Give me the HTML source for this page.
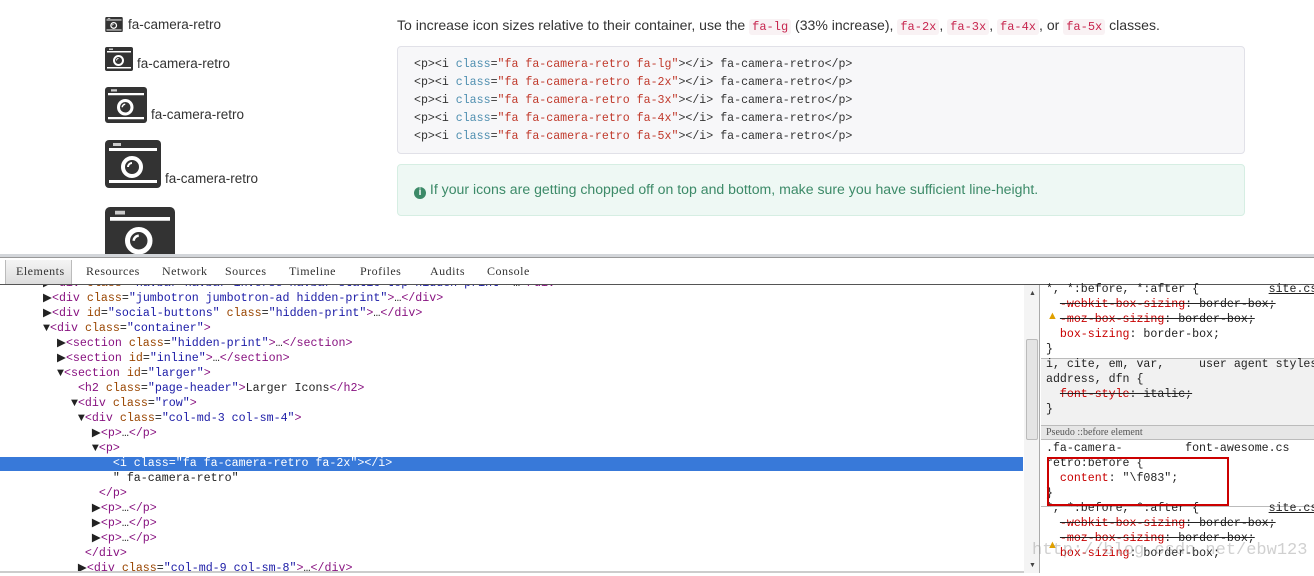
<!DOCTYPE html>
<html><head><meta charset="utf-8"><style>
*{margin:0;padding:0;box-sizing:border-box}
body{width:1314px;height:573px;overflow:hidden;background:#fff;font-family:"Liberation Sans",sans-serif;position:relative}
.a{position:absolute}
.lbl{font-size:13.5px;color:#333;white-space:nowrap}
code.k{font-family:"Liberation Mono",monospace;font-size:12px;color:#c7254e;background:#f9f2f4;padding:1px 3px;border-radius:3px}
pre{font-family:"Liberation Mono",monospace;font-size:11.6px;line-height:18px;color:#333}
.tg{color:#333}
.at{color:#4f8fb0}
.av{color:#c0392b}
.dt{font-family:"Liberation Mono",monospace;font-size:11.65px;line-height:15px;white-space:pre;color:#222}
.n{color:#881280}.an{color:#994500}.v{color:#1a1aa6}
.tab{position:absolute;top:264px;font-family:"Liberation Serif",serif;font-size:12px;color:#333;letter-spacing:.5px}
.s{font-family:"Liberation Mono",monospace;font-size:11.6px;line-height:15px;white-space:pre;color:#222}
.p{color:#c80000}
.x{text-decoration:line-through}
</style></head><body>

<svg width="0" height="0" style="position:absolute"><defs>
<symbol id="cam" viewBox="0 0 56 48">
<rect x="0" y="0" width="56" height="48" rx="4" fill="#333"/>
<rect x="8" y="3" width="8" height="3" fill="#ccc"/>
<rect x="4" y="8" width="48" height="3" fill="#fff"/>
<circle cx="27" cy="27" r="9" fill="none" stroke="#fff" stroke-width="4"/>
<path d="M23 27a4 4 0 0 1 4-4" stroke="#fff" stroke-width="2" fill="none"/>
<rect x="4" y="40" width="48" height="3" fill="#fff"/>
</symbol></defs></svg>

<svg class="a" style="left:105px;top:17px" width="18" height="15"><use href="#cam"/></svg>
<div class="a lbl" style="left:128px;top:17px">fa-camera-retro</div>
<svg class="a" style="left:105px;top:47px" width="28" height="24"><use href="#cam"/></svg>
<div class="a lbl" style="left:137px;top:56px">fa-camera-retro</div>
<svg class="a" style="left:105px;top:87px" width="42" height="36"><use href="#cam"/></svg>
<div class="a lbl" style="left:151px;top:107px">fa-camera-retro</div>
<svg class="a" style="left:105px;top:140px" width="56" height="48"><use href="#cam"/></svg>
<div class="a lbl" style="left:165px;top:171px">fa-camera-retro</div>
<svg class="a" style="left:105px;top:207px" width="70" height="60" viewBox="0 0 70 60"><use href="#cam" width="70" height="60"/></svg>

<div class="a lbl" style="left:397px;top:17px;font-size:14.05px">To increase icon sizes relative to their container, use the <code class="k">fa-lg</code> (33% increase), <code class="k">fa-2x</code>, <code class="k">fa-3x</code>, <code class="k">fa-4x</code>, or <code class="k">fa-5x</code> classes.</div>

<div class="a" style="left:397px;top:46px;width:848px;height:108px;background:#f7f7f9;border:1px solid #e1e1e8;border-radius:4px;padding:9px 16px">
<pre><span class="tg">&lt;p&gt;&lt;i</span> <span class="at">class</span>=<span class="av">"fa fa-camera-retro fa-lg"</span><span class="tg">&gt;&lt;/i&gt;</span> fa-camera-retro<span class="tg">&lt;/p&gt;</span>
<span class="tg">&lt;p&gt;&lt;i</span> <span class="at">class</span>=<span class="av">"fa fa-camera-retro fa-2x"</span><span class="tg">&gt;&lt;/i&gt;</span> fa-camera-retro<span class="tg">&lt;/p&gt;</span>
<span class="tg">&lt;p&gt;&lt;i</span> <span class="at">class</span>=<span class="av">"fa fa-camera-retro fa-3x"</span><span class="tg">&gt;&lt;/i&gt;</span> fa-camera-retro<span class="tg">&lt;/p&gt;</span>
<span class="tg">&lt;p&gt;&lt;i</span> <span class="at">class</span>=<span class="av">"fa fa-camera-retro fa-4x"</span><span class="tg">&gt;&lt;/i&gt;</span> fa-camera-retro<span class="tg">&lt;/p&gt;</span>
<span class="tg">&lt;p&gt;&lt;i</span> <span class="at">class</span>=<span class="av">"fa fa-camera-retro fa-5x"</span><span class="tg">&gt;&lt;/i&gt;</span> fa-camera-retro<span class="tg">&lt;/p&gt;</span></pre>
</div>

<div class="a" style="left:397px;top:164px;width:848px;height:52px;background:#eef8f4;border:1px solid #d6eee3;border-radius:4px;padding:16px 16px;font-size:14.1px;color:#3c8a68;white-space:nowrap">
<span style="display:inline-block;width:12px;height:12px;border-radius:50%;background:#3c8a68;color:#fff;font-size:10px;line-height:12px;text-align:center;font-weight:bold;vertical-align:-1px">i</span> If your icons are getting chopped off on top and bottom, make sure you have sufficient line-height.</div>

<!-- devtools -->
<div class="a" style="left:0;top:255px;width:1314px;height:318px;background:#fff"></div>
<div class="a" style="left:0;top:254px;width:1314px;height:4px;background:#d3d6da;border-bottom:1px solid #999"></div>
<div class="a" style="left:0;top:284px;width:1314px;height:1px;background:#555"></div>
<div class="a" style="left:5px;top:260px;width:67px;height:24px;background:linear-gradient(#f4f4f4,#ddd);border-left:1px solid #bbb;border-right:1px solid #bbb"></div>
<div class="tab" style="left:16px">Elements</div>
<div class="tab" style="left:86px">Resources</div>
<div class="tab" style="left:162px">Network</div>
<div class="tab" style="left:225px">Sources</div>
<div class="tab" style="left:289px">Timeline</div>
<div class="tab" style="left:360px">Profiles</div>
<div class="tab" style="left:430px">Audits</div>
<div class="tab" style="left:487px">Console</div>

<div class="a" style="left:0;top:457px;width:1023px;height:14px;background:#3879d9"></div>
<div class="a dt" style="left:43px;top:276px;clip-path:inset(9px 0 0 0)">▶<span class="n">&lt;div</span> <span class="an">class</span>=<span class="v">"navbar navbar-inverse navbar-static-top hidden-print"</span><span class="n">&gt;</span>…<span class="n">&lt;/div&gt;</span></div>
<div class="a dt" style="left:43px;top:291px">▶<span class="n">&lt;div</span> <span class="an">class</span>=<span class="v">"jumbotron jumbotron-ad hidden-print"</span><span class="n">&gt;</span>…<span class="n">&lt;/div&gt;</span>
▶<span class="n">&lt;div</span> <span class="an">id</span>=<span class="v">"social-buttons"</span> <span class="an">class</span>=<span class="v">"hidden-print"</span><span class="n">&gt;</span>…<span class="n">&lt;/div&gt;</span>
▼<span class="n">&lt;div</span> <span class="an">class</span>=<span class="v">"container"</span><span class="n">&gt;</span>
  ▶<span class="n">&lt;section</span> <span class="an">class</span>=<span class="v">"hidden-print"</span><span class="n">&gt;</span>…<span class="n">&lt;/section&gt;</span>
  ▶<span class="n">&lt;section</span> <span class="an">id</span>=<span class="v">"inline"</span><span class="n">&gt;</span>…<span class="n">&lt;/section&gt;</span>
  ▼<span class="n">&lt;section</span> <span class="an">id</span>=<span class="v">"larger"</span><span class="n">&gt;</span>
     <span class="n">&lt;h2</span> <span class="an">class</span>=<span class="v">"page-header"</span><span class="n">&gt;</span>Larger Icons<span class="n">&lt;/h2&gt;</span>
    ▼<span class="n">&lt;div</span> <span class="an">class</span>=<span class="v">"row"</span><span class="n">&gt;</span>
     ▼<span class="n">&lt;div</span> <span class="an">class</span>=<span class="v">"col-md-3 col-sm-4"</span><span class="n">&gt;</span>
       ▶<span class="n">&lt;p&gt;</span>…<span class="n">&lt;/p&gt;</span>
       ▼<span class="n">&lt;p&gt;</span>
<span style="color:#fff">          &lt;i class="fa fa-camera-retro fa-2x"&gt;&lt;/i&gt;</span>
          " fa-camera-retro"
        <span class="n">&lt;/p&gt;</span>
       ▶<span class="n">&lt;p&gt;</span>…<span class="n">&lt;/p&gt;</span>
       ▶<span class="n">&lt;p&gt;</span>…<span class="n">&lt;/p&gt;</span>
       ▶<span class="n">&lt;p&gt;</span>…<span class="n">&lt;/p&gt;</span>
      <span class="n">&lt;/div&gt;</span>
     ▶<span class="n">&lt;div</span> <span class="an">class</span>=<span class="v">"col-md-9 col-sm-8"</span><span class="n">&gt;</span>…<span class="n">&lt;/div&gt;</span></div>
<div class="a" style="left:0;top:571px;width:1024px;height:2px;background:#ccc"></div>

<!-- scrollbar -->
<div class="a" style="left:1024px;top:285px;width:16px;height:288px;background:#f4f4f4;border-right:1px solid #aaa"></div>
<div class="a" style="left:1026px;top:339px;width:12px;height:101px;background:#e4e4e4;border:1px solid #bbb;border-radius:2px"></div>
<div class="a" style="left:1029px;top:290px;font-size:7px;color:#444">▲</div>
<div class="a" style="left:1029px;top:562px;font-size:7px;color:#444">▼</div>

<!-- styles -->
<div class="a" style="left:1041px;top:358px;width:273px;height:67px;background:#f1f1f1;border-top:1px solid #bbb"></div>
<div class="a" style="left:1041px;top:425px;width:273px;height:15px;background:#e6e6e6;border-top:1px solid #bbb;border-bottom:1px solid #bbb"></div>
<div class="a" style="left:1041px;top:506px;width:273px;height:1px;background:#bbb"></div>
<div class="a s" style="left:1046px;top:282px">*, *:before, *:after {          <u>site.cs</u>
  <span class="x"><span class="p">-webkit-box-sizing</span>: border-box;</span>
  <span class="x"><span class="p">-moz-box-sizing</span>: border-box;</span>
  <span class="p">box-sizing</span>: border-box;
}
i, cite, em, var,     user agent styles
address, dfn {
  <span class="x"><span class="p">font-style</span>: italic;</span>
}</div>
<div class="a" style="left:1046px;top:427px;font-family:'Liberation Serif',serif;font-size:10px;color:#555">Pseudo ::before element</div>
<div class="a s" style="left:1046px;top:441px">.fa-camera-         font-awesome.cs
retro:before {
  <span class="p">content</span>: "\f083";
}
*, *:before, *:after {          <u>site.cs</u>
  <span class="x"><span class="p">-webkit-box-sizing</span>: border-box;</span>
  <span class="x"><span class="p">-moz-box-sizing</span>: border-box;</span>
  <span class="p">box-sizing</span>: border-box;</div>
<div class="a" style="left:1047px;top:457px;width:182px;height:49px;border:2px solid #c00"></div>
<div class="a" style="left:1047px;top:310px;color:#e0a000;font-size:11px">▲</div>
<div class="a" style="left:1047px;top:539px;color:#e0a000;font-size:11px">▲</div>
<div class="a" style="left:1032px;top:541px;font-family:'Liberation Mono',monospace;font-size:17px;color:rgba(150,150,150,.45)">http://blog.csdn.net/ebw123</div>
</body></html>
